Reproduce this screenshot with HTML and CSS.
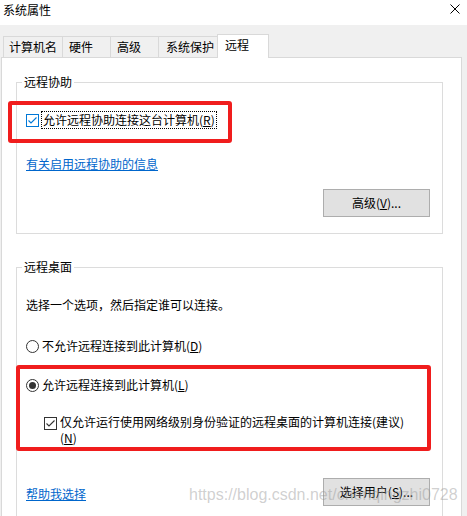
FILE: index.html
```html
<!DOCTYPE html>
<html lang="zh-CN">
<head>
<meta charset="utf-8">
<title>系统属性</title>
<link rel="stylesheet" href="styles.css">
</head>
<body>
<div class="window">
  <div class="titlebar">
    <span class="title">系统属性</span>
    <svg class="close" width="10" height="10" viewBox="0 0 10 10"><path d="M0.5 0.5L9.5 9.5M9.5 0.5L0.5 9.5" stroke="#000" stroke-width="1" fill="none"/></svg>
  </div>
  <div class="tabs">
    <div class="tab tab-wide first">计算机名</div>
    <div class="tab tab-narrow">硬件</div>
    <div class="tab tab-narrow">高级</div>
    <div class="tab tab-wide">系统保护</div>
    <div class="tab active">远程</div>
  </div>
  <div class="panel">
    <fieldset class="group g1">
      <legend>远程协助</legend>
      <div class="cb-row">
        <svg class="box" width="13" height="13" viewBox="0 0 13 13"><rect x="0.5" y="0.5" width="12" height="12" fill="#fff" stroke="#0078d7"/><path d="M2.5 6.5L5 9L10.5 3.5" stroke="#0078d7" stroke-width="1.1" fill="none"/></svg>
        <span class="focus-text">允许远程协助连接这台计算机(<u>R</u>)</span>
      </div>
      <a class="link l1" href="#">有关启用远程协助的信息</a>
      <div class="btn-row"><button class="btn">高级(<u>V</u>)...</button></div>
    </fieldset>
    <fieldset class="group g2">
      <legend>远程桌面</legend>
      <div class="desc">选择一个选项，然后指定谁可以连接。</div>
      <div class="radio-row r1">
        <svg class="box" width="13" height="13" viewBox="0 0 13 13"><circle cx="6.5" cy="6.5" r="6" fill="#fff" stroke="#333"/></svg>
        <span class="opt">不允许远程连接到此计算机(<u>D</u>)</span>
      </div>
      <div class="radio-row r2">
        <svg class="box" width="13" height="13" viewBox="0 0 13 13"><circle cx="6.5" cy="6.5" r="6" fill="#fff" stroke="#333"/><circle cx="6.5" cy="6.5" r="3.5" fill="#333"/></svg>
        <span class="opt">允许远程连接到此计算机(<u>L</u>)</span>
      </div>
      <div class="sub-row">
        <svg class="box sub-box" width="13" height="13" viewBox="0 0 13 13"><rect x="0.5" y="0.5" width="12" height="12" fill="#fff" stroke="#333"/><path d="M2.5 6.5L5 9L10.5 3.5" stroke="#333" stroke-width="1.1" fill="none"/></svg>
        <span class="sub-text">仅允许运行使用网络级别身份验证的远程桌面的计算机连接(建议)<br>(<u>N</u>)</span>
      </div>
      <div class="foot-row">
        <a class="link l2" href="#">帮助我选择</a>
        <button class="btn">选择用户(<u>S</u>)...</button>
      </div>
    </fieldset>
  </div>
  <div class="mark mark-1"></div>
  <div class="mark mark-2"></div>
  <div class="watermark">https://blog.csdn.net/chenqingzhi0728</div>
</div>
</body>
</html>
```
FILE: styles.css
```css
body {
  margin: 0;
}
.window {
  position: relative;
  width: 467px;
  height: 516px;
  overflow: hidden;
  background: #f0f0f0;
  font-family: "Noto Sans CJK SC", "Noto Sans", sans-serif;
  font-size: 12px;
  line-height: 16px;
  color: #000;
}
.titlebar {
  height: 25px;
  background: #fff;
  display: flex;
  justify-content: space-between;
  align-items: flex-start;
  padding: 2px 7px 0 3px;
  box-sizing: border-box;
}
.close {
  margin-top: 2px;
}
.tabs {
  display: flex;
  align-items: flex-end;
  height: 23px;
  margin: 9px 0 0 3px;
}
.tab {
  height: 21px;
  box-sizing: border-box;
  border: 1px solid #d9d9d9;
  border-bottom: none;
  background: #f0f0f0;
  margin-left: -1px;
  padding-left: 6px;
  line-height: 19px;
  white-space: nowrap;
}
.tab.first {
  margin-left: 0;
  padding-left: 5px;
}
.tab-wide {
  width: 60px;
}
.tab-narrow {
  width: 49px;
}
.tab-wide:not(.first) {
  padding-left: 7px;
}
.tab.active {
  width: 52px;
  height: 24px;
  margin-bottom: -1px;
  background: #fff;
  position: relative;
  z-index: 1;
  line-height: 20px;
  padding-left: 7px;
}
.panel {
  margin-left: 1px;
  width: 461px;
  height: 480px;
  box-sizing: border-box;
  background: #fff;
  border: 1px solid #d9d9d9;
  padding-top: 16px;
}
.group {
  margin: 0 0 0 14px;
  width: 427px;
  box-sizing: border-box;
  border: 1px solid #dcdcdc;
  padding: 0 12px 16px 9px;
  min-inline-size: 0;
}
.group legend {
  padding: 0 2px;
  margin-left: -4px;
  line-height: 16px;
}
.g2 {
  margin-top: 25px;
  padding-bottom: 40px;
}
.box {
  flex: none;
  display: block;
}
.cb-row {
  display: flex;
  align-items: center;
  height: 18px;
  margin-top: 21px;
}
.focus-text {
  margin-left: 2px;
  padding: 0 1px;
  border: 1px dotted #000;
  line-height: 16px;
}
.link {
  display: block;
  width: fit-content;
  color: #0066cc;
  text-decoration: underline;
}
.l1 {
  margin-top: 27px;
}
.btn-row {
  display: flex;
  justify-content: flex-end;
  margin-top: 17px;
}
.btn {
  width: 107px;
  height: 28px;
  padding: 0;
  background: #e1e1e1;
  border: 1px solid #adadad;
  font: inherit;
  color: #000;
}
.desc {
  margin-top: 22px;
}
.radio-row {
  display: flex;
  align-items: center;
  height: 16px;
}
.r1 {
  margin-top: 25px;
}
.r2 {
  margin-top: 23px;
}
.opt {
  margin-left: 3px;
}
.sub-row {
  display: flex;
  align-items: flex-start;
  margin: 21px 0 0 18px;
}
.sub-box {
  margin-top: 3px;
}
.sub-text {
  margin-left: 3px;
}
.foot-row {
  display: flex;
  justify-content: space-between;
  align-items: center;
  margin-top: 32px;
}
.l2 {
  margin-top: 4px;
}
.mark {
  position: absolute;
  box-sizing: border-box;
  border: 4px solid #f01d1d;
  border-radius: 3px;
}
.mark-1 {
  left: 8px;
  top: 101px;
  width: 224px;
  height: 42px;
}
.mark-2 {
  left: 16px;
  top: 365px;
  width: 415px;
  height: 86px;
}
.watermark {
  position: absolute;
  left: 189px;
  top: 486px;
  font-family: "Liberation Sans", Arial, sans-serif;
  font-size: 16px;
  line-height: 18px;
  color: rgba(150, 150, 150, 0.45);
  white-space: nowrap;
}
```
